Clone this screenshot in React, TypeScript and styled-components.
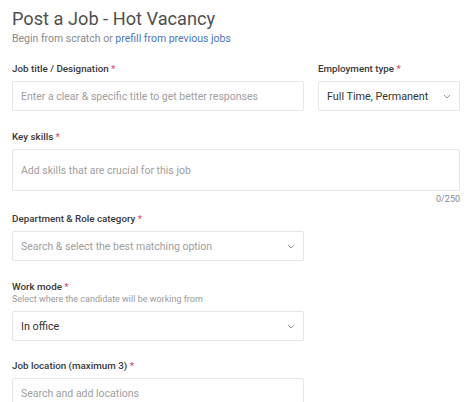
import React from "react";
import styled, { createGlobalStyle } from "styled-components";

const Global = createGlobalStyle`
  html, body { margin: 0; padding: 0; background: #fff; }
  body { font-family: Roboto, "Noto Sans", Arial, sans-serif; }
  * { box-sizing: border-box; }
`;

const Page = styled.div`
  width: 474px;
  padding: 8px 14px 0 12px;
  display: flex;
  flex-direction: column;
`;

const Title = styled.h1`
  margin: 0;
  font-size: 18.2px;
  font-weight: 400;
  color: #505050;
  line-height: 22px;
`;

const Sub = styled.p`
  margin: 2px 0 0;
  font-size: 10.5px;
  color: #8a8a8a;
  line-height: 14px;
  a { color: #4a78c2; text-decoration: none; }
`;

const Row = styled.div<{ $mt: number }>`
  display: flex;
  gap: 14px;
  margin-top: ${(p) => p.$mt}px;
`;

const Field = styled.div<{ $w?: number; $mt?: number }>`
  display: flex;
  flex-direction: column;
  width: ${(p) => (p.$w ? `${p.$w}px` : "100%")};
  margin-top: ${(p) => p.$mt ?? 0}px;
`;

const Label = styled.label`
  font-size: 9.8px;
  font-weight: 500;
  color: #383838;
  line-height: 12px;
  span { color: #e0537a; }
`;

const Help = styled.div`
  font-size: 9px;
  color: #9a9a9a;
  line-height: 11px;
  margin-top: 1px;
`;

const Box = styled.div<{ $h?: number; $dark?: boolean; $fs?: number }>`
  margin-top: 6px;
  height: ${(p) => p.$h ?? 30}px;
  border: 1px solid #e6e6e6;
  border-radius: 2px;
  display: flex;
  align-items: center;
  justify-content: space-between;
  padding: 0 8px 0 8px;
  font-size: ${(p) => p.$fs ?? 10.5}px;
  color: ${(p) => (p.$dark ? "#333" : "#a0a0a0")};
  white-space: nowrap;
`;

const Counter = styled.div`
  text-align: right;
  font-size: 9px;
  color: #8a8a8a;
  margin-top: 3px;
  line-height: 11px;
`;

const Chevron = () => (
  <svg width="8" height="5" viewBox="0 0 8 5" fill="none">
    <path d="M1 1l3 3 3-3" stroke="#999" strokeWidth="1" />
  </svg>
);

export default function App() {
  return (
    <Page>
      <Global />
      <Title>Post a Job - Hot Vacancy</Title>
      <Sub>
        Begin from scratch or <a href="#">prefill from previous jobs</a>
      </Sub>

      <Row $mt={17}>
        <Field $w={292}>
          <Label>Job title / Designation <span>*</span></Label>
          <Box>Enter a clear &amp; specific title to get better responses</Box>
        </Field>
        <Field $w={142}>
          <Label>Employment type <span>*</span></Label>
          <Box $dark $fs={10.8}>
            Full Time, Permanent
            <Chevron />
          </Box>
        </Field>
      </Row>

      <Field $mt={20}>
        <Label>Key skills <span>*</span></Label>
        <Box $h={42}>Add skills that are crucial for this job</Box>
        <Counter>0/250</Counter>
      </Field>

      <Field $w={292} $mt={8}>
        <Label>Department &amp; Role category <span>*</span></Label>
        <Box>
          Search &amp; select the best matching option
          <Chevron />
        </Box>
      </Field>

      <Field $w={292} $mt={20}>
        <Label>Work mode <span>*</span></Label>
        <Help>Select where the candidate will be working from</Help>
        <Box $dark $fs={10.8}>
          In office
          <Chevron />
        </Box>
      </Field>

      <Field $w={292} $mt={19}>
        <Label>Job location (maximum 3) <span>*</span></Label>
        <Box>Search and add locations</Box>
      </Field>
    </Page>
  );
}
